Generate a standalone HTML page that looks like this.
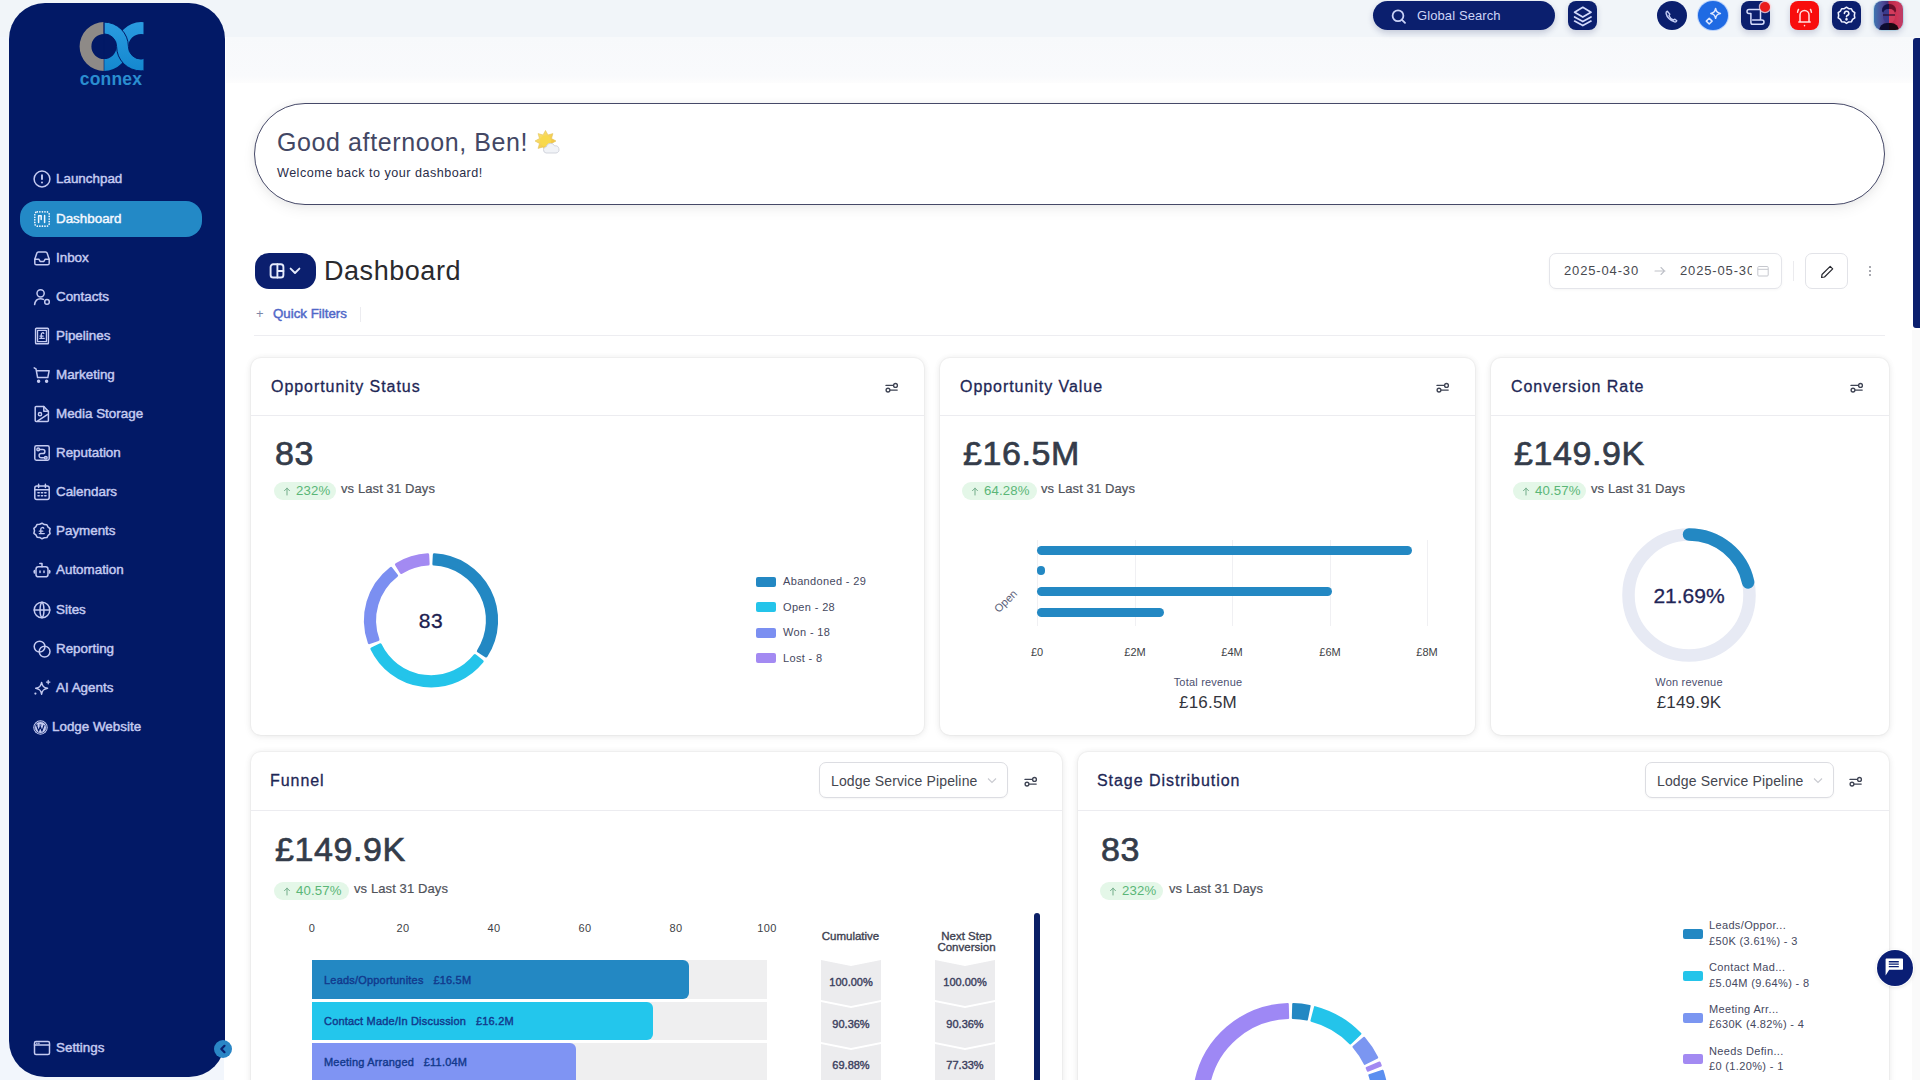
<!DOCTYPE html>
<html><head><meta charset="utf-8"><style>
*{box-sizing:border-box;margin:0;padding:0}
html,body{width:1920px;height:1080px;overflow:hidden;background:#fff;font-family:"Liberation Sans",sans-serif;color:#2d3748}
.abs{position:absolute}
#topbar{position:absolute;left:0;top:0;width:1920px;height:37px;background:#f1f5f9}
#sub{position:absolute;left:226px;top:37px;width:1694px;height:46px;background:linear-gradient(#f7f9fb 0%,#f9fafc 85%,#fdfdfd 100%)}
#side{position:absolute;left:9px;top:3px;width:216px;height:1074px;background:#021966;border-radius:36px}
.nav{position:absolute;left:11px;width:182px;height:36px;border-radius:16px;color:#c5cbf1;font-size:13.4px;-webkit-text-stroke:.45px #c5cbf1}
.nav .ic{position:absolute;left:13px;top:9px;width:18px;height:18px}
.nav .tx{position:absolute;left:36px;top:0;line-height:36px}
.nav.act{background:#2389c6;color:#f4f8ff;-webkit-text-stroke:.45px #f4f8ff}
.tb{position:absolute;top:1px;width:29px;height:29px;background:#0b1f6e;border-radius:8px;box-shadow:0 3px 6px rgba(20,30,90,.18)}
.card{position:absolute;background:#fff;border-radius:10px;box-shadow:0 0 0 1px rgba(0,0,0,.025),0 0 6px rgba(0,0,0,.07),0 2px 10px rgba(0,0,0,.05)}
.card .hd{position:absolute;left:0;top:0;right:0;height:58px;border-bottom:1px solid #ececf0}
.ttl{position:absolute;font-size:16px;color:#1e2756;letter-spacing:.95px;line-height:20px;-webkit-text-stroke:.3px #1e2756}
.big{position:absolute;font-size:34px;color:#343c4a;line-height:36px;letter-spacing:.6px;-webkit-text-stroke:.7px #343c4a}
.badge{position:absolute;height:18px;border-radius:9px;background:#e4f7e8;color:#5ab677;font-size:13.2px;letter-spacing:.15px}
.vs{position:absolute;font-size:13px;color:#50535b;line-height:18px;letter-spacing:.1px;-webkit-text-stroke:.2px #4d5059}
.lg{position:absolute;font-size:11px;color:#454860;letter-spacing:.35px;line-height:14px;white-space:nowrap}
.sw{position:absolute;width:20px;height:10px;border-radius:2px}
.dd{position:absolute;height:36px;border:1px solid #dcdde2;border-radius:7px;background:#fff;font-size:14px;color:#44464f;letter-spacing:.15px;box-shadow:0 1px 2px rgba(0,0,0,.04)}
</style></head><body>
<div class="abs" style="left:0;top:0;width:224px;height:1080px;background:#f2f6fc"></div><div id="topbar"></div><div id="sub"></div>
<div class="abs" style="left:1373px;top:1px;width:182px;height:29px;border-radius:15px;background:#0b1f6e;box-shadow:0 3px 6px rgba(20,30,90,.2)"><svg class="abs" style="left:18px;top:8px" width="16" height="15" viewBox="0 0 16 15" fill="none" stroke="#c9d2f7" stroke-width="1.8" stroke-linecap="round"><circle cx="7" cy="6.8" r="5.4"/><path d="M11 10.8l3 3"/></svg><span class="abs" style="left:44px;top:-.5px;line-height:29px;font-size:13px;color:#cdd5f7;letter-spacing:.1px">Global Search</span></div>
<div class="tb" style="left:1568px"><svg class="abs" style="left:3px;top:3px" width="24" height="24" viewBox="0 0 24 24" fill="none" stroke="#d3dafb" stroke-width="1.7" stroke-linejoin="round" stroke-linecap="round"><path d="M11.8 3.3l8.2 4.9-8.2 4.9-8.2-4.9z"/><path d="M3.6 13l8.2 4.6 8.2-4.6"/><path d="M3.6 17.1l8.2 4.5 8.2-4.5"/></svg></div>
<div class="tb" style="left:1657px;border-radius:50%;width:30px;box-shadow:none"><svg class="abs" style="left:7px;top:8px" width="16" height="16" viewBox="0 0 16 16" fill="none" stroke="#c4cdf5" stroke-width="1.4" stroke-linecap="round" stroke-linejoin="round"><path d="M3.3 2.2c-.9.4-1.4 1.3-1.2 2.3.7 3.7 4.7 7.7 8.4 8.4 1 .2 1.9-.3 2.3-1.2l-1.9-1.5-1.6.8C7.6 10.2 5.8 8.4 5 6.7l.8-1.6z"/></svg></div>
<div class="tb" style="left:1698px;border-radius:50%;width:30px;background:#1f6ae3;box-shadow:0 0 0 1px rgba(90,150,255,.35)"><svg class="abs" style="left:5px;top:5px" width="20" height="20" viewBox="0 0 20 20" fill="none" stroke="#dbe6ff" stroke-width="1.5" stroke-linejoin="round"><path d="M12.6 2.5c.6 3.2 1.5 4.2 4.8 4.9-3.3.7-4.2 1.7-4.8 4.9-.6-3.2-1.5-4.2-4.8-4.9 3.3-.7 4.2-1.7 4.8-4.9z"/><path d="M6.2 12.2l2.9 2.9-2.9 2.9-2.9-2.9z"/></svg></div>
<div class="tb" style="left:1741px"><svg class="abs" style="left:5px;top:7px" width="19" height="17" viewBox="0 0 19 17" fill="none" stroke="#d5dcfb" stroke-width="1.5" stroke-linejoin="round" stroke-linecap="round"><path d="M14.5 11.4V1.4H3a2 2 0 0 0 0 4h1.9v9a1.8 1.8 0 0 0 1.8 1.8h9.2a2.1 2.1 0 0 0 0-4.2H6.6"/></svg><div class="abs" style="left:19px;top:1px;width:10px;height:10px;border-radius:50%;background:#ea1d1d;box-shadow:0 0 0 1.2px rgba(255,210,215,.8)"></div></div>
<div class="tb" style="left:1790px;background:#f80d0d"><svg class="abs" style="left:4px;top:4px" width="21" height="23" viewBox="0 0 21 23" fill="none" stroke="#ffe0e0" stroke-width="1.5" stroke-linecap="round" stroke-linejoin="round"><path d="M6 16.8V10a4.5 4.5 0 0 1 9 0v6.8M4.8 17h11.4M4.5 4.5c-.5.8-.8 1.7-.9 2.7M16.5 4.5c.5.8.8 1.7.9 2.7M10.5 20.5v.3"/></svg></div>
<div class="tb" style="left:1832px"><svg class="abs" style="left:4px;top:4px" width="21" height="21" viewBox="0 0 19 19" fill="none" stroke="#eef1ff" stroke-width="1.4" stroke-linecap="round" stroke-linejoin="round"><path d="M9.5 2l2 1.3 2.4.1 1.1 2.1 2 1.4-.4 2.4.4 2.4-2 1.4-1.1 2.1-2.4.1-2 1.3-2-1.3-2.4-.1-1.1-2.1-2-1.4.4-2.4-.4-2.4 2-1.4L5.1 3.4l2.4-.1z"/><path d="M7.6 7.6a2 2 0 1 1 2.6 1.9c-.5.2-.7.6-.7 1.2"/><circle cx="9.5" cy="13" r=".5" fill="#eef1ff"/></svg></div>
<div class="tb" style="left:1874px;background:linear-gradient(90deg,#3f74b0 0%,#4d4a98 30%,#40307a 48%,#b52a4a 52%,#cf3457 80%,#b9406a 100%);overflow:hidden;box-shadow:0 0 0 1px rgba(120,200,230,.35),0 3px 6px rgba(20,30,90,.18)"><div class="abs" style="left:8px;top:3px;width:14px;height:9px;border-radius:7px 7px 3px 3px;background:linear-gradient(90deg,#12124a 50%,#6a0e2a 50%)"></div><div class="abs" style="left:9px;top:8px;width:12px;height:14px;border-radius:5px 5px 6px 6px;background:linear-gradient(90deg,#3a3a8c 50%,#d23c5c 50%)"></div><div class="abs" style="left:9px;top:13px;width:12px;height:1.5px;background:rgba(40,10,40,.6)"></div><div class="abs" style="left:5px;top:22px;width:20px;height:10px;border-radius:8px 8px 0 0;background:linear-gradient(90deg,#0d0c30 50%,#1a0812 50%)"></div></div>
<div id="side"><svg class="abs" style="left:57px;top:13px" width="90" height="80" viewBox="66 16 90 80"><defs><clipPath id="cl"><rect x="60" y="21.5" width="83.5" height="50"/></clipPath><linearGradient id="lg1" gradientUnits="userSpaceOnUse" x1="0" y1="22" x2="0" y2="71"><stop offset="0" stop-color="#2a9be0"/><stop offset="1" stop-color="#1488cf"/></linearGradient></defs><path d="M79.6 46.5A24.4 24.4 0 0 1 104 22.1L104 33.9A12.6 12.6 0 0 0 91.4 46.5ZM104 70.9A24.4 24.4 0 0 1 79.6 46.5L91.4 46.5A12.6 12.6 0 0 0 104 59.1Z" fill="#8e8a87"/><g clip-path="url(#cl)" fill="url(#lg1)"><path d="M116.6 46.5A24.4 24.4 0 0 1 165.4 46.5L153.6 46.5A12.6 12.6 0 0 0 128.4 46.5Z"/><path d="M128.4 46.5A24.4 24.4 0 0 1 104 70.9L104 59.1A12.6 12.6 0 0 0 116.6 46.5Z"/><path d="M104 22.1A24.4 24.4 0 0 1 128.4 46.5A12.6 12.6 0 0 0 153.6 46.5L165.4 46.5A24.4 24.4 0 0 1 116.6 46.5A12.6 12.6 0 0 0 104 33.9Z" stroke="#021966" stroke-width="1"/></g><path d="M104 21.5v50" stroke="#021966" stroke-width=".6"/><text x="111" y="85" text-anchor="middle" font-family="Liberation Sans" font-weight="bold" font-size="17.5" fill="#2a8dd0" letter-spacing=".2">connex</text></svg><div class="nav" style="top:158px"><svg class="ic" viewBox="0 0 18 18" fill="none" stroke="currentColor" stroke-width="1.5" stroke-linecap="round" stroke-linejoin="round"><circle cx="9" cy="9" r="7.9"/><path d="M9 5.3v3.8" stroke-width="1.9"/><circle cx="9" cy="12.6" r="1" fill="currentColor" stroke="none"/></svg><span class="tx">Launchpad</span></div>
<div class="nav act" style="top:198px"><svg class="ic" viewBox="0 0 18 18" fill="none" stroke="currentColor" stroke-width="1.5" stroke-linecap="round" stroke-linejoin="round"><rect x="1.8" y="1.8" width="14.4" height="14.4" rx="2.5" stroke-dasharray="0.01 2.55" stroke-width="1.7"/><path d="M5.6 12.5V5.8M5.6 5.8h2.6v3.8M11.6 5.4v7.2M8.2 9.6"/></svg><span class="tx">Dashboard</span></div>
<div class="nav" style="top:237px"><svg class="ic" viewBox="0 0 18 18" fill="none" stroke="currentColor" stroke-width="1.5" stroke-linecap="round" stroke-linejoin="round"><path d="M1.8 10.2L3.9 4a1.6 1.6 0 0 1 1.5-1.1h7.2A1.6 1.6 0 0 1 14.1 4l2.1 6.2v4a1.6 1.6 0 0 1-1.6 1.6H3.4a1.6 1.6 0 0 1-1.6-1.6z"/><path d="M1.8 10.2h4l1.3 2.2h3.8l1.3-2.2h4"/></svg><span class="tx">Inbox</span></div>
<div class="nav" style="top:276px"><svg class="ic" viewBox="0 0 18 18" fill="none" stroke="currentColor" stroke-width="1.5" stroke-linecap="round" stroke-linejoin="round"><circle cx="7.6" cy="5.3" r="3.6"/><path d="M1.6 16.6c.5-3.7 3-5.8 6-5.8 1.1 0 2 .2 2.8.6"/><circle cx="14" cy="13.9" r="2.3"/></svg><span class="tx">Contacts</span></div>
<div class="nav" style="top:315px"><svg class="ic" viewBox="0 0 18 18" fill="none" stroke="currentColor" stroke-width="1.5" stroke-linecap="round" stroke-linejoin="round"><rect x="2.6" y="1.3" width="12.8" height="15.4" rx=".8"/><rect x="4.6" y="3.3" width="8.8" height="11.4" stroke-width="1.2"/><path d="M10.8 6.4c-.4-.9-2.5-1-2.5.9v3.9M7 9.1h3.2M6.8 11.4h4.4" stroke-width="1.3"/></svg><span class="tx">Pipelines</span></div>
<div class="nav" style="top:354px"><svg class="ic" viewBox="0 0 18 18" fill="none" stroke="currentColor" stroke-width="1.5" stroke-linecap="round" stroke-linejoin="round"><path d="M1.2 1.8l1.8 1 1.6 8.8h10.2l1.3-6.8H4"/><circle cx="5.6" cy="15.2" r="1" fill="currentColor"/><circle cx="13.6" cy="15.2" r="1" fill="currentColor"/></svg><span class="tx">Marketing</span></div>
<div class="nav" style="top:393px"><svg class="ic" viewBox="0 0 18 18" fill="none" stroke="currentColor" stroke-width="1.5" stroke-linecap="round" stroke-linejoin="round"><path d="M3.2 1.6h7.6l4.6 4.6v9.4a1 1 0 0 1-1 1H3.2a1 1 0 0 1-1-1v-13a1 1 0 0 1 1-1z"/><circle cx="7" cy="9.2" r="1.6"/><path d="M4.8 15.8l9.5-6.2M10.8 1.6v4.6h4.6"/></svg><span class="tx">Media Storage</span></div>
<div class="nav" style="top:432px"><svg class="ic" viewBox="0 0 18 18" fill="none" stroke="currentColor" stroke-width="1.5" stroke-linecap="round" stroke-linejoin="round"><rect x="1.8" y="1.8" width="14.4" height="14.4" rx="1.6"/><path d="M6.3 5.4h3.5a2.1 2.1 0 0 1 0 4.2H8.2a2.1 2.1 0 0 0 0 4.2h3.5"/><circle cx="5.2" cy="5.4" r="1.3"/><circle cx="12.8" cy="13.8" r="1.3"/></svg><span class="tx">Reputation</span></div>
<div class="nav" style="top:471px"><svg class="ic" viewBox="0 0 18 18" fill="none" stroke="currentColor" stroke-width="1.5" stroke-linecap="round" stroke-linejoin="round"><rect x="1.8" y="3" width="14.4" height="13.6" rx="2"/><path d="M1.8 6.8h14.4M5.6 1.2v3.4M12.4 1.2v3.4"/><path d="M5 9.8h1.2M8.4 9.8h1.2M11.8 9.8h1.2M5 12.8h1.2M8.4 12.8h1.2M11.8 12.8h1.2" stroke-width="1.6"/></svg><span class="tx">Calendars</span></div>
<div class="nav" style="top:510px"><svg class="ic" viewBox="0 0 18 18" fill="none" stroke="currentColor" stroke-width="1.5" stroke-linecap="round" stroke-linejoin="round"><path d="M9 1.2l2.3 1.4 2.6.2 1.2 2.3 2 1.6-.6 2.5.6 2.5-2 1.6-1.2 2.3-2.6.2L9 16.8l-2.3-1.4-2.6-.2-1.2-2.3-2-1.6.6-2.5-.6-2.5 2-1.6 1.2-2.3 2.6-.2z"/><path d="M10.8 6.2c-.5-1-3-1.1-3 .9v4.4M6.3 9.2h3.5M6.3 11.6h5" stroke-width="1.3"/></svg><span class="tx">Payments</span></div>
<div class="nav" style="top:549px"><svg class="ic" viewBox="0 0 18 18" fill="none" stroke="currentColor" stroke-width="1.5" stroke-linecap="round" stroke-linejoin="round"><rect x="3" y="5.8" width="12" height="10" rx="2.4"/><path d="M9 5.8V2.4M6.8 2.4h2.2M1.2 10.8v-0M16.8 10.8v0M7 10v1.5M11 10v1.5"/><path d="M1.4 9.5v2.6M16.6 9.5v2.6"/></svg><span class="tx">Automation</span></div>
<div class="nav" style="top:589px"><svg class="ic" viewBox="0 0 18 18" fill="none" stroke="currentColor" stroke-width="1.5" stroke-linecap="round" stroke-linejoin="round"><circle cx="9" cy="9" r="7.8"/><path d="M1.2 9h15.6M9 1.2c-2.6 2.3-2.6 13.3 0 15.6M9 1.2c2.6 2.3 2.6 13.3 0 15.6"/></svg><span class="tx">Sites</span></div>
<div class="nav" style="top:628px"><svg class="ic" viewBox="0 0 18 18" fill="none" stroke="currentColor" stroke-width="1.5" stroke-linecap="round" stroke-linejoin="round"><circle cx="6.6" cy="6.6" r="5.4"/><circle cx="11.6" cy="11.6" r="5.4"/></svg><span class="tx">Reporting</span></div>
<div class="nav" style="top:667px"><svg class="ic" viewBox="0 0 18 18" fill="none" stroke="currentColor" stroke-width="1.5" stroke-linecap="round" stroke-linejoin="round"><path d="M8.6 3.4c.6 3.8 1.9 5.2 5.9 5.9-4 .7-5.3 2.1-5.9 5.9-.6-3.8-1.9-5.2-5.9-5.9 4-.7 5.3-2.1 5.9-5.9z"/><path d="M15.2 1.4v3.4M13.5 3.1h3.4" stroke-width="1.3"/><circle cx="2.4" cy="14.6" r="1.1" fill="currentColor" stroke="none"/></svg><span class="tx">AI Agents</span></div>
<div class="nav" style="top:706px"><svg class="ic" style="left:13px;top:11px;width:15px;height:15px" viewBox="0 0 20 20"><circle cx="10" cy="10" r="9.6" fill="currentColor"/><circle cx="10" cy="10" r="7.9" fill="none" stroke="#021966" stroke-width=".9"/><path d="M4.6 6.6l2.9 8.2 2.2-6.2 2.2 6.2 2.9-8.2M3.6 6.6h2.6M8.6 6.6h2.6" fill="none" stroke="#021966" stroke-width="1.5" stroke-linejoin="round"/></svg><span class="tx" style="left:32px">Lodge Website</span></div>
<div class="nav" style="top:1027px"><svg class="ic" viewBox="0 0 18 18" fill="none" stroke="currentColor" stroke-width="1.5" stroke-linecap="round" stroke-linejoin="round"><rect x="1.5" y="2.5" width="15" height="13" rx="1.5"/><path d="M1.5 6h15M3.8 4.2h.2M5.8 4.2h.2"/></svg><span class="tx">Settings</span></div></div>
<div class="abs" style="left:214px;top:1040px;width:18px;height:18px;border-radius:50%;background:#2a86c6"><svg class="abs" style="left:4px;top:4px" width="10" height="10" viewBox="0 0 10 10" fill="none" stroke="#0b1f6e" stroke-width="2.2" stroke-linecap="round" stroke-linejoin="round"><path d="M6.5 1.8L3.3 5l3.2 3.2"/></svg></div>
<div class="abs" style="left:1913px;top:38px;width:7px;height:290px;border-radius:3px 0 0 3px;background:#0b1f6e"></div>
<div class="abs" style="left:1912px;top:330px;width:8px;height:750px;background:#fafafa"></div>
<div class="abs" style="left:254px;top:103px;width:1631px;height:102px;border-radius:51px;border:1.5px solid #464968;background:#fff;box-shadow:0 0 8px rgba(0,0,0,.05),0 5px 14px rgba(0,0,0,.06)"><div class="abs" style="left:22px;top:23px;font-size:25px;color:#434764;letter-spacing:.6px;line-height:30px;white-space:nowrap">Good afternoon, Ben!</div><svg class="abs" style="left:279px;top:25px" width="30" height="28" viewBox="0 0 30 28"><defs><linearGradient id="sg" x1="0" y1="0" x2="1" y2="1"><stop offset="0" stop-color="#fbe97a"/><stop offset="1" stop-color="#f0b830"/></linearGradient></defs><polygon points="11.50,1.50 13.99,5.99 18.92,4.58 17.51,9.51 22.00,12.00 17.51,14.49 18.92,19.42 13.99,18.01 11.50,22.50 9.01,18.01 4.08,19.42 5.49,14.49 1.00,12.00 5.49,9.51 4.08,4.58 9.01,5.99" fill="url(#sg)" stroke="#e3c25a" stroke-width=".6" stroke-linejoin="round"/><circle cx="11.5" cy="12" r="5.5" fill="#f8d94c"/><path d="M12 24a3.2 3.2 0 0 1 .3-6.3 4.4 4.4 0 0 1 8.3-.8 3.5 3.5 0 1 1 1.5 7.1z" fill="#f1f3f7" stroke="#c9ccd6" stroke-width=".8"/></svg><div class="abs" style="left:22px;top:61px;font-size:12.6px;color:#2a2d48;letter-spacing:.48px;line-height:16px;white-space:nowrap">Welcome back to your dashboard!</div></div>
<div class="abs" style="left:255px;top:253px;width:61px;height:36px;border-radius:14px;background:#0b1f6e"><svg class="abs" style="left:13px;top:10px" width="35" height="16" viewBox="0 0 35 16" fill="none" stroke="#e6ebfc" stroke-width="1.9" stroke-linejoin="round" stroke-linecap="round"><rect x="2.6" y="1.3" width="12.8" height="13.2" rx="2.6"/><path d="M9.4 1.3v13.2M9.4 8h6M22.6 5.6l4.4 4.4 4.4-4.4"/></svg></div>
<div class="abs" style="left:324px;top:254px;font-size:27px;color:#2a2a2e;line-height:34px;letter-spacing:.55px">Dashboard</div>
<div class="abs" style="left:256px;top:306px;font-size:13px;color:#7d87a8;line-height:16px">+</div>
<div class="abs" style="left:273px;top:306px;font-size:13.3px;color:#5068c8;line-height:16px;-webkit-text-stroke:.45px #5068c8">Quick Filters</div>
<div class="abs" style="left:360px;top:307px;width:1px;height:15px;background:#ececf0"></div>
<div class="abs" style="left:254px;top:335px;width:1631px;height:1px;background:#ededf1"></div>
<div class="abs" style="left:1549px;top:253px;width:233px;height:36px;border:1px solid #e4e5ea;border-radius:7px;background:#fff;box-shadow:0 1px 3px rgba(0,0,0,.04);font-size:13px;color:#48494f;letter-spacing:.85px"><span class="abs" style="left:14px;top:0;line-height:34px">2025-04-30</span><svg class="abs" style="left:104px;top:12px" width="12" height="10" viewBox="0 0 12 10" fill="none" stroke="#bfc1c8" stroke-width="1.1" stroke-linecap="round"><path d="M1 5h10M7 1.5L10.5 5 7 8.5"/></svg><div class="abs" style="left:130px;top:0;width:72px;height:34px;overflow:hidden"><span class="abs" style="left:0;top:0;line-height:34px;white-space:nowrap">2025-05-30</span></div><svg class="abs" style="left:207px;top:11px" width="12" height="12" viewBox="0 0 12 12" fill="none" stroke="#c5c7cd" stroke-width="1"><rect x=".8" y="1.5" width="10.4" height="9.5" rx="1"/><path d="M.8 4.3h10.4"/></svg></div>
<div class="abs" style="left:1793px;top:261px;width:1px;height:20px;background:#ebebee"></div>
<div class="abs" style="left:1805px;top:253px;width:43px;height:36px;border:1px solid #e2e3e8;border-radius:7px;background:#fff"><svg class="abs" style="left:13px;top:10px" width="16" height="16" viewBox="0 0 16 16" fill="none" stroke="#26272e" stroke-width="1.2" stroke-linejoin="round"><path d="M11.2 2.3l2.5 2.5-8.2 8.2-2.9.4.4-2.9z"/></svg></div>
<div class="abs" style="left:1869px;top:265px;width:2px;height:12px;background:radial-gradient(circle,#a8a9b0 45%,transparent 50%) 0 0/2px 4px"></div>
<div class="card" style="left:251px;top:358px;width:673px;height:377px"><div class="hd"></div></div><div class="ttl" style="left:271px;top:377px">Opportunity Status</div><svg class="abs" style="left:885px;top:381.5px" width="14" height="12" viewBox="0 0 14 12" fill="none" stroke="#3f4454" stroke-width="1.35" stroke-linecap="round"><path d="M1 3.4h7.3M5.3 8.1h6.9"/><circle cx="10.5" cy="3.4" r="1.9"/><circle cx="3" cy="8.1" r="1.9"/></svg>
<div class="card" style="left:940px;top:358px;width:535px;height:377px"><div class="hd"></div></div><div class="ttl" style="left:960px;top:377px">Opportunity Value</div><svg class="abs" style="left:1436px;top:381.5px" width="14" height="12" viewBox="0 0 14 12" fill="none" stroke="#3f4454" stroke-width="1.35" stroke-linecap="round"><path d="M1 3.4h7.3M5.3 8.1h6.9"/><circle cx="10.5" cy="3.4" r="1.9"/><circle cx="3" cy="8.1" r="1.9"/></svg>
<div class="card" style="left:1491px;top:358px;width:398px;height:377px"><div class="hd"></div></div><div class="ttl" style="left:1511px;top:377px">Conversion Rate</div><svg class="abs" style="left:1850px;top:381.5px" width="14" height="12" viewBox="0 0 14 12" fill="none" stroke="#3f4454" stroke-width="1.35" stroke-linecap="round"><path d="M1 3.4h7.3M5.3 8.1h6.9"/><circle cx="10.5" cy="3.4" r="1.9"/><circle cx="3" cy="8.1" r="1.9"/></svg>
<div class="big" style="left:275px;top:434.5px">83</div><div class="badge" style="left:274px;top:482px;width:62px"><svg class="abs" style="left:9px;top:5px" width="8" height="9" viewBox="0 0 8 9" fill="none" stroke="#6aa884" stroke-width=".95" stroke-linecap="round"><path d="M4 8V1.2M1.5 3.7L4 1.2l2.5 2.5"/></svg><span class="abs" style="left:22px;top:0;line-height:18px">232%</span></div><div class="vs" style="left:341px;top:480px">vs Last 31 Days</div>
<div class="big" style="left:963px;top:434.5px">£16.5M</div><div class="badge" style="left:962px;top:482px;width:75px"><svg class="abs" style="left:9px;top:5px" width="8" height="9" viewBox="0 0 8 9" fill="none" stroke="#6aa884" stroke-width=".95" stroke-linecap="round"><path d="M4 8V1.2M1.5 3.7L4 1.2l2.5 2.5"/></svg><span class="abs" style="left:22px;top:0;line-height:18px">64.28%</span></div><div class="vs" style="left:1041px;top:480px">vs Last 31 Days</div>
<div class="big" style="left:1514px;top:434.5px">£149.9K</div><div class="badge" style="left:1513px;top:482px;width:73px"><svg class="abs" style="left:9px;top:5px" width="8" height="9" viewBox="0 0 8 9" fill="none" stroke="#6aa884" stroke-width=".95" stroke-linecap="round"><path d="M4 8V1.2M1.5 3.7L4 1.2l2.5 2.5"/></svg><span class="abs" style="left:22px;top:0;line-height:18px">40.57%</span></div><div class="vs" style="left:1591px;top:480px">vs Last 31 Days</div>
<svg class="abs" style="left:0;top:0" width="1920" height="1080"><path d="M434.32 554.78A65.6 65.6 0 0 1 486.08 655.93L478.35 650.94A56.4 56.4 0 0 0 433.85 563.97Z" fill="#2388c3" stroke="#2388c3" stroke-width="3" stroke-linejoin="round"/><path d="M482.20 661.32A65.6 65.6 0 0 1 371.89 648.75L380.18 644.76A56.4 56.4 0 0 0 475.02 655.56Z" fill="#24c4ea" stroke="#24c4ea" stroke-width="3" stroke-linejoin="round"/><path d="M369.32 642.63A65.6 65.6 0 0 1 390.97 568.33L396.59 575.61A56.4 56.4 0 0 0 377.97 639.50Z" fill="#7b8ff1" stroke="#7b8ff1" stroke-width="3" stroke-linejoin="round"/><path d="M396.43 564.55A65.6 65.6 0 0 1 427.68 554.78L428.15 563.97A56.4 56.4 0 0 0 401.28 572.37Z" fill="#a38af2" stroke="#a38af2" stroke-width="3" stroke-linejoin="round"/></svg>
<div class="abs" style="left:381px;top:607px;width:100px;text-align:center;font-size:21px;color:#1c2150;line-height:28px;letter-spacing:.5px;-webkit-text-stroke:.3px #1c2150">83</div>
<div class="sw" style="left:756px;top:576.6px;background:#2388c3"></div><div class="lg" style="left:783px;top:574.0px">Abandoned - 29</div>
<div class="sw" style="left:756px;top:602.1px;background:#24c4ea"></div><div class="lg" style="left:783px;top:599.5px">Open - 28</div>
<div class="sw" style="left:756px;top:627.6px;background:#7b8ff1"></div><div class="lg" style="left:783px;top:625.0px">Won - 18</div>
<div class="sw" style="left:756px;top:653.1px;background:#a38af2"></div><div class="lg" style="left:783px;top:650.5px">Lost - 8</div>
<div class="abs" style="left:1037px;top:540px;width:1px;height:86px;background:#f0f0f3"></div><div class="abs" style="left:1135px;top:540px;width:1px;height:86px;background:#f0f0f3"></div><div class="abs" style="left:1232px;top:540px;width:1px;height:86px;background:#f0f0f3"></div><div class="abs" style="left:1330px;top:540px;width:1px;height:86px;background:#f0f0f3"></div><div class="abs" style="left:1427px;top:540px;width:1px;height:86px;background:#f0f0f3"></div>
<div class="abs" style="left:1037px;top:545.5px;width:375px;height:9px;border-radius:5px;background:#2388c3"></div>
<div class="abs" style="left:1037px;top:566.0px;width:8px;height:9px;border-radius:5px;background:#2388c3"></div>
<div class="abs" style="left:1037px;top:586.5px;width:295px;height:9px;border-radius:5px;background:#2388c3"></div>
<div class="abs" style="left:1037px;top:607.5px;width:127px;height:9px;border-radius:5px;background:#2388c3"></div>
<div class="abs" style="left:1007px;top:645px;width:60px;text-align:center;font-size:11px;color:#3e3f46;line-height:14px">£0</div>
<div class="abs" style="left:1105px;top:645px;width:60px;text-align:center;font-size:11px;color:#3e3f46;line-height:14px">£2M</div>
<div class="abs" style="left:1202px;top:645px;width:60px;text-align:center;font-size:11px;color:#3e3f46;line-height:14px">£4M</div>
<div class="abs" style="left:1300px;top:645px;width:60px;text-align:center;font-size:11px;color:#3e3f46;line-height:14px">£6M</div>
<div class="abs" style="left:1397px;top:645px;width:60px;text-align:center;font-size:11px;color:#3e3f46;line-height:14px">£8M</div>
<div class="abs" style="left:992px;top:594px;font-size:11px;color:#5a5e78;line-height:14px;transform:rotate(-45deg)">Open</div>
<div class="abs" style="left:1108px;top:675px;width:200px;text-align:center;font-size:11px;color:#4c5070;line-height:14px;letter-spacing:.2px">Total revenue</div>
<div class="abs" style="left:1108px;top:692px;width:200px;text-align:center;font-size:17px;color:#33343c;line-height:22px;letter-spacing:.2px">£16.5M</div>
<svg class="abs" style="left:0;top:0" width="1920" height="1080"><circle cx="1689" cy="595" r="60.5" fill="none" stroke="#e7eaf4" stroke-width="12.5"/><path d="M1689 534.5A60.5 60.5 0 0 1 1748.18 582.42" fill="none" stroke="#2388c3" stroke-width="12.5" stroke-linecap="round"/></svg>
<div class="abs" style="left:1589px;top:582px;width:200px;text-align:center;font-size:21px;color:#1f2557;line-height:28px;-webkit-text-stroke:.3px #1f2557">21.69%</div>
<div class="abs" style="left:1589px;top:675px;width:200px;text-align:center;font-size:11px;color:#4c5070;line-height:14px;letter-spacing:.2px">Won revenue</div>
<div class="abs" style="left:1589px;top:692px;width:200px;text-align:center;font-size:17px;color:#33343c;line-height:22px;letter-spacing:.2px">£149.9K</div>
<div class="card" style="left:251px;top:752px;width:811px;height:360px"><div class="hd" style="height:59px"></div></div><div class="ttl" style="left:270px;top:771px">Funnel</div><div class="dd" style="left:819px;top:762px;width:189px"><span class="abs" style="left:11px;top:1px;line-height:34px">Lodge Service Pipeline</span><svg class="abs" style="left:167px;top:14px" width="10" height="7" viewBox="0 0 10 7" fill="none" stroke="#c9cad0" stroke-width="1.1"><path d="M1 1.5l4 4 4-4"/></svg></div><svg class="abs" style="left:1024px;top:775.5px" width="14" height="12" viewBox="0 0 14 12" fill="none" stroke="#3f4454" stroke-width="1.35" stroke-linecap="round"><path d="M1 3.4h7.3M5.3 8.1h6.9"/><circle cx="10.5" cy="3.4" r="1.9"/><circle cx="3" cy="8.1" r="1.9"/></svg>
<div class="card" style="left:1078px;top:752px;width:811px;height:360px"><div class="hd" style="height:59px"></div></div><div class="ttl" style="left:1097px;top:771px">Stage Distribution</div><div class="dd" style="left:1645px;top:762px;width:189px"><span class="abs" style="left:11px;top:1px;line-height:34px">Lodge Service Pipeline</span><svg class="abs" style="left:167px;top:14px" width="10" height="7" viewBox="0 0 10 7" fill="none" stroke="#c9cad0" stroke-width="1.1"><path d="M1 1.5l4 4 4-4"/></svg></div><svg class="abs" style="left:1849px;top:775.5px" width="14" height="12" viewBox="0 0 14 12" fill="none" stroke="#3f4454" stroke-width="1.35" stroke-linecap="round"><path d="M1 3.4h7.3M5.3 8.1h6.9"/><circle cx="10.5" cy="3.4" r="1.9"/><circle cx="3" cy="8.1" r="1.9"/></svg>
<div class="big" style="left:275px;top:830.5px">£149.9K</div><div class="badge" style="left:274px;top:881.5px;width:75px"><svg class="abs" style="left:9px;top:5px" width="8" height="9" viewBox="0 0 8 9" fill="none" stroke="#6aa884" stroke-width=".95" stroke-linecap="round"><path d="M4 8V1.2M1.5 3.7L4 1.2l2.5 2.5"/></svg><span class="abs" style="left:22px;top:0;line-height:18px">40.57%</span></div><div class="vs" style="left:354px;top:879.5px">vs Last 31 Days</div>
<div class="big" style="left:1101px;top:830.5px">83</div><div class="badge" style="left:1100px;top:881.5px;width:63px"><svg class="abs" style="left:9px;top:5px" width="8" height="9" viewBox="0 0 8 9" fill="none" stroke="#6aa884" stroke-width=".95" stroke-linecap="round"><path d="M4 8V1.2M1.5 3.7L4 1.2l2.5 2.5"/></svg><span class="abs" style="left:22px;top:0;line-height:18px">232%</span></div><div class="vs" style="left:1169px;top:879.5px">vs Last 31 Days</div>
<div class="abs" style="left:292px;top:921px;width:40px;text-align:center;font-size:11px;color:#3e3f46;line-height:14px;letter-spacing:.3px">0</div>
<div class="abs" style="left:383px;top:921px;width:40px;text-align:center;font-size:11px;color:#3e3f46;line-height:14px;letter-spacing:.3px">20</div>
<div class="abs" style="left:474px;top:921px;width:40px;text-align:center;font-size:11px;color:#3e3f46;line-height:14px;letter-spacing:.3px">40</div>
<div class="abs" style="left:565px;top:921px;width:40px;text-align:center;font-size:11px;color:#3e3f46;line-height:14px;letter-spacing:.3px">60</div>
<div class="abs" style="left:656px;top:921px;width:40px;text-align:center;font-size:11px;color:#3e3f46;line-height:14px;letter-spacing:.3px">80</div>
<div class="abs" style="left:747px;top:921px;width:40px;text-align:center;font-size:11px;color:#3e3f46;line-height:14px;letter-spacing:.3px">100</div>
<div class="abs" style="left:312px;top:960px;width:455px;height:39px;background:#efeff0"></div>
<div class="abs" style="left:312px;top:960px;width:377px;height:39px;background:#2388c3;border-radius:0 6px 6px 0"></div>
<div class="abs" style="left:324px;top:972.5px;font-size:11px;color:#12398c;line-height:14px;white-space:nowrap;letter-spacing:.2px;-webkit-text-stroke:.4px #12398c">Leads/Opportunites&nbsp;&nbsp;&nbsp;£16.5M</div>
<div class="abs" style="left:312px;top:1002px;width:455px;height:38px;background:#efeff0"></div>
<div class="abs" style="left:312px;top:1002px;width:341px;height:38px;background:#23c6ec;border-radius:0 6px 6px 0"></div>
<div class="abs" style="left:324px;top:1014.0px;font-size:11px;color:#12398c;line-height:14px;white-space:nowrap;letter-spacing:.2px;-webkit-text-stroke:.4px #12398c">Contact Made/In Discussion&nbsp;&nbsp;&nbsp;£16.2M</div>
<div class="abs" style="left:312px;top:1043px;width:455px;height:47px;background:#efeff0"></div>
<div class="abs" style="left:312px;top:1043px;width:264px;height:47px;background:#7f94f3;border-radius:0 6px 6px 0"></div>
<div class="abs" style="left:324px;top:1055px;font-size:11px;color:#12398c;line-height:14px;white-space:nowrap;letter-spacing:.2px;-webkit-text-stroke:.4px #12398c">Meeting Arranged&nbsp;&nbsp;&nbsp;£11.04M</div>
<div class="abs" style="left:800px;top:930px;width:101px;text-align:center;font-size:11.5px;color:#3d4150;line-height:13px;-webkit-text-stroke:.35px #3d4150">Cumulative</div>
<div class="abs" style="left:916px;top:930.5px;width:101px;text-align:center;font-size:11.5px;color:#3d4150;line-height:11.5px;-webkit-text-stroke:.35px #3d4150">Next Step<br>Conversion</div>
<svg class="abs" style="left:0;top:0" width="1920" height="1080"><polygon points="821,960 851,966 881,960 881,1000 851,1006 821,1000" fill="#ececee"/><polygon points="821,1002 851,1008 881,1002 881,1042 851,1048 821,1042" fill="#ececee"/><polygon points="821,1044 851,1050 881,1044 881,1084 851,1090 821,1084" fill="#ececee"/><polygon points="935,960 965,966 995,960 995,1000 965,1006 935,1000" fill="#ececee"/><polygon points="935,1002 965,1008 995,1002 995,1042 965,1048 935,1042" fill="#ececee"/><polygon points="935,1044 965,1050 995,1044 995,1084 965,1090 935,1084" fill="#ececee"/></svg>
<div class="abs" style="left:811px;top:975.0px;width:80px;text-align:center;font-size:11px;color:#3c4160;line-height:14px;-webkit-text-stroke:.4px #3c4160">100.00%</div>
<div class="abs" style="left:811px;top:1016.5px;width:80px;text-align:center;font-size:11px;color:#3c4160;line-height:14px;-webkit-text-stroke:.4px #3c4160">90.36%</div>
<div class="abs" style="left:811px;top:1058.0px;width:80px;text-align:center;font-size:11px;color:#3c4160;line-height:14px;-webkit-text-stroke:.4px #3c4160">69.88%</div>
<div class="abs" style="left:925px;top:975.0px;width:80px;text-align:center;font-size:11px;color:#3c4160;line-height:14px;-webkit-text-stroke:.4px #3c4160">100.00%</div>
<div class="abs" style="left:925px;top:1016.5px;width:80px;text-align:center;font-size:11px;color:#3c4160;line-height:14px;-webkit-text-stroke:.4px #3c4160">90.36%</div>
<div class="abs" style="left:925px;top:1058.0px;width:80px;text-align:center;font-size:11px;color:#3c4160;line-height:14px;-webkit-text-stroke:.4px #3c4160">77.33%</div>
<div class="abs" style="left:1034px;top:913px;width:6px;height:200px;border-radius:3px;background:#0b1f66"></div>
<svg class="abs" style="left:0;top:0" width="1920" height="1080"><path d="M1293.21 1004.04A97 97 0 0 1 1309.67 1005.91L1306.91 1019.64A83 83 0 0 0 1292.82 1018.03Z" fill="#2388c3" stroke="#2388c3" stroke-width="2" stroke-linejoin="round"/><path d="M1314.95 1007.13A97 97 0 0 1 1360.39 1033.74L1350.31 1043.45A83 83 0 0 0 1311.42 1020.68Z" fill="#24c4ea" stroke="#24c4ea" stroke-width="2" stroke-linejoin="round"/><path d="M1364.04 1037.75A97 97 0 0 1 1377.23 1057.57L1364.71 1063.84A83 83 0 0 0 1353.43 1046.88Z" fill="#7b96f1" stroke="#7b96f1" stroke-width="2" stroke-linejoin="round"/><path d="M1379.52 1062.48A97 97 0 0 1 1380.81 1065.61L1367.78 1070.72A83 83 0 0 0 1366.67 1068.04Z" fill="#a38af2" stroke="#a38af2" stroke-width="2" stroke-linejoin="round"/><path d="M1382.65 1070.70A97 97 0 0 1 1366.52 1161.25L1355.55 1152.56A83 83 0 0 0 1369.35 1075.08Z" fill="#5b8ff0" stroke="#5b8ff0" stroke-width="2" stroke-linejoin="round"/><path d="M1254.79 1191.19A97 97 0 0 1 1287.79 1004.04L1288.18 1018.03A83 83 0 0 0 1259.95 1178.17Z" fill="#9e88f5" stroke="#9e88f5" stroke-width="2" stroke-linejoin="round"/></svg>
<div class="sw" style="left:1683px;top:929.0px;background:#2388c3"></div><div class="lg" style="left:1709px;top:918.2px;line-height:15.5px">Leads/Oppor...<br>£50K (3.61%) - 3</div>
<div class="sw" style="left:1683px;top:970.8px;background:#24c4ea"></div><div class="lg" style="left:1709px;top:960.0px;line-height:15.5px">Contact Mad...<br>£5.04M (9.64%) - 8</div>
<div class="sw" style="left:1683px;top:1012.6px;background:#7b96f1"></div><div class="lg" style="left:1709px;top:1001.8000000000001px;line-height:15.5px">Meeting Arr...<br>£630K (4.82%) - 4</div>
<div class="sw" style="left:1683px;top:1054.4px;background:#a38af2"></div><div class="lg" style="left:1709px;top:1043.6000000000001px;line-height:15.5px">Needs Defin...<br>£0 (1.20%) - 1</div>
<div class="abs" style="left:1877px;top:950px;width:36px;height:36px;border-radius:50%;background:#0a1e74;box-shadow:0 0 0 1px rgba(255,255,255,.9),0 1px 4px rgba(0,0,0,.15)"><svg class="abs" style="left:8px;top:8px" width="19" height="19" viewBox="0 0 19 19"><path d="M1.4 .5h15.8a.8.8 0 0 1 .8.8v9.7a.8.8 0 0 1-.8.8H4.2L.6 17.5V1.3a.8.8 0 0 1 .8-.8z" fill="#fff"/><path d="M3.8 3.8h10M3.8 6.1h10M3.8 8.6h10" stroke="#0a1e74" stroke-width="1.4"/></svg></div>
</body></html>
